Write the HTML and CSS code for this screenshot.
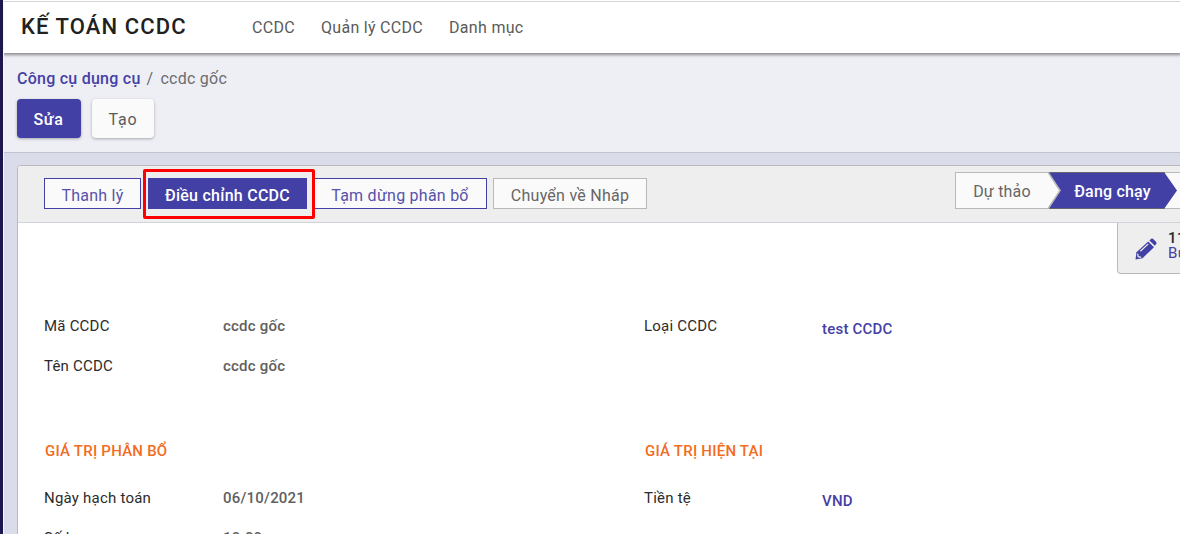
FILE: index.html
```html
<!DOCTYPE html>
<html lang="vi">
<head>
<meta charset="utf-8">
<title>Kế toán CCDC</title>
<link rel="stylesheet" href="styles.css">
</head>
<body>
<div class="app">
  <header class="navbar">
    <div class="brand">KẾ TOÁN CCDC</div>
    <nav class="menu"><a>CCDC</a><a>Quản lý CCDC</a><a>Danh mục</a></nav>
  </header>
  <section class="control-panel">
    <div class="breadcrumb"><a>Công cụ dụng cụ</a><span class="sep">/</span><span class="current">ccdc gốc</span></div>
    <div class="actions"><button class="btn primary">Sửa</button><button class="btn">Tạo</button></div>
  </section>
  <main class="content">
    <div class="sheet">
      <div class="statusbar">
        <div class="status-buttons">
          <button class="sbtn outline liquidate">Thanh lý</button>
          <button class="sbtn filled">Điều chỉnh CCDC<span class="highlight"></span></button>
          <button class="sbtn outline pause">Tạm dừng phân bổ</button>
          <button class="sbtn draft">Chuyển về Nháp</button>
        </div>
        <div class="stages">
          <div class="stage">Dự thảo</div>
          <div class="stage active">
            <svg class="arrow" viewBox="0 0 129 37"><path class="under" d="M0 0L12.500 18.500L0 37Z"/><path class="fill" d="M0 0H116L129 18.500L116 37H0L12.500 18.500Z"/><path class="edge" d="M0 .5H116.500M0 36.500H116.500"/><path class="chevron" d="M0 0L12 18.500L0 37"/></svg>
            <span>Đang chạy</span>
          </div>
          <div class="stage rest"></div>
        </div>
      </div>
      <div class="stat-row">
        <div class="stat">
          <svg class="pencil" viewBox="0 0 22 22"><path d="M.5 21.500L1.500 14.200L13.200 3.600L19 9.200L7.500 20.200Z"/><path d="M14.400 2.500L16.200 .8Q17.200 0 18.200 .9L21.200 3.900Q22 4.900 21.200 5.900L19.900 7.700Z"/><path class="cut" d="M5.300 13.300L13.300 5.900M2.600 15.600L3.200 18.700L6.200 19.300"/></svg>
          <div class="stat-text"><b>11</b><span>Bút toán</span></div>
        </div>
      </div>
      <div class="columns">
        <div class="group">
          <div class="field"><label>Mã CCDC</label><span>ccdc gốc</span></div>
          <div class="field"><label>Tên CCDC</label><span>ccdc gốc</span></div>
        </div>
        <div class="group">
          <div class="field"><label>Loại CCDC</label><a>test CCDC</a></div>
        </div>
      </div>
      <div class="columns values">
        <div class="group">
          <h2>GIÁ TRỊ PHÂN BỔ</h2>
          <div class="field"><label>Ngày hạch toán</label><span>06/10/2021</span></div>
          <div class="field"><label>Số lượng</label><span>10.00</span></div>
        </div>
        <div class="group">
          <h2>GIÁ TRỊ HIỆN TẠI</h2>
          <div class="field linked"><label>Tiền tệ</label><a>VND</a></div>
          <div class="field total"><label>Giá trị đã phân bổ</label></div>
        </div>
      </div>
    </div>
  </main>
</div>
</body>
</html>
```
FILE: styles.css
```css
* { box-sizing: border-box; }
body { margin: 0; height: 534px; overflow: hidden; background: #1c184d; font-family: Roboto, sans-serif; font-size: 16px; color: #4d4d4d; }
button { font: inherit; color: inherit; }
.app { height: 534px; margin-left: 3px; display: flex; flex-direction: column; overflow: hidden; background: #dadce9; border-left: 1px solid #f5f5fa; }
.navbar { flex: none; height: 53px; padding: 0 0 2px 17px; display: flex; align-items: center; background: #fff; border-top: 1px solid #fff; box-shadow: inset 0 1px #d5d5d5, 0 1px 3px 1px rgba(0,0,0,.42); position: relative; z-index: 1; }
.brand { width: 231px; font-size: 22px; font-weight: 500; letter-spacing: 1.1px; color: #212121; }
.menu { display: flex; gap: 26px; padding-top: 2px; letter-spacing: .3px; color: #5a5a5a; }
.control-panel { flex: none; height: 100px; padding: 15px 13px 0; background: #eeeff5; border-bottom: 1px solid #c1c3cd; }
.breadcrumb { height: 21px; line-height: 21px; display: flex; font-weight: 500; letter-spacing: .25px; color: #6c6c70; }
.breadcrumb a { color: #4540a5; }
.sep { margin: 0 7px 0 6px; font-weight: 400; }
.current { font-weight: 400; }
.actions { display: flex; gap: 11px; margin-top: 10px; }
.btn { width: 62px; height: 39px; padding: 2px 0 0; border: 0; border-radius: 4px; background: #fafafa; color: #5a5a5a; letter-spacing: .8px; box-shadow: 0 1px 3px rgba(0,0,0,.3); }
.btn.primary { width: 64px; padding-right: 1px; background: #4340a5; color: #fff; font-weight: 500; letter-spacing: .6px; }
.content { flex: 1; padding: 12px 0 0 13px; }
.sheet { width: 1250px; height: 500px; background: #fff; border: 1px solid #b9babd; border-radius: 4px 0 0 0; overflow: hidden; }
.statusbar { height: 57px; display: flex; justify-content: space-between; background: #eee; border-bottom: 1px solid #ced4da; padding: 6px 0 0 26px; }
.status-buttons { display: flex; gap: 6px; padding-top: 6px; }
.sbtn { position: relative; height: 31px; padding: 3px 0 0; border: 1px solid #b9b9b9; background: #fafafa; color: #666; width: 154px; letter-spacing: .25px; }
.outline { border-color: #4340a5; color: #5752aa; }
.liquidate { width: 97px; }
.filled { z-index: 2; width: 159px; margin-left: 1px; border-color: #4340a5; background: #4340a5; color: #fff; font-weight: 500; }
.pause { width: 174px; }
.highlight { position: absolute; left: -6px; top: -10px; width: 172px; height: 50px; border: 3px solid #f00; border-radius: 2px; z-index: 2; }
.stages { display: flex; width: 311px; height: 37px; }
.stage { width: 93px; height: 37px; border: 1px solid #b9b9b9; border-right: 0; background: #fafafa; text-align: center; line-height: 37px; color: #666; letter-spacing: .2px; }
.stage.active { position: relative; z-index: 1; width: 129px; margin-right: -14px; border: 0; background: none; color: #fff; font-weight: 500; line-height: 39px; }
.arrow { position: absolute; left: 0; top: 0; width: 129px; height: 37px; }
.stage.active span { position: relative; }
.under { fill: #fafafa; }
.fill { fill: #4340a5; }
.edge { fill: none; stroke: #66656f; }
.chevron { fill: none; stroke: #b5b5b5; stroke-width: 1.5; }
.stage.rest { width: 103px; }
.stat-row { padding-left: 1099px; height: 51px; }
.stat { width: 151px; height: 51px; padding: 6px 0 0 17px; display: flex; gap: 11px; background: #eee; border: 1px solid #b9b9b9; border-top: 0; border-radius: 0 0 0 4px; }
.pencil { width: 22px; height: 22px; margin-top: 9px; fill: #4340a5; }
.cut { fill: none; stroke: #eee; stroke-width: 1.2; }
.stat-text { display: flex; flex-direction: column; font-size: 15px; line-height: 15px; letter-spacing: .5px; color: #4540a5; padding-top: 2px; }
.stat-text b { font-weight: 500; color: #24292e; }
.columns { display: grid; grid-template-columns: 600px 600px; padding: 32px 0 0 26px; }
.field { display: flex; height: 40px; line-height: 40px; font-size: 15px; letter-spacing: .22px; }
.field.linked { height: 44px; }
.field.total { letter-spacing: .5px; }
.field label { width: 178px; color: #2b2b2b; }
.field span { padding-left: 1px; font-weight: 500; color: #606060; }
.field a { color: #4540a5; padding-top: 3px; font-weight: 500; }
.values { padding-top: 42px; }
h2 { margin: 0 0 4px; padding: 0 0 0 1px; height: 46px; line-height: 47px; font-size: 15px; font-weight: 500; letter-spacing: .23px; color: #f26c21; }
```
